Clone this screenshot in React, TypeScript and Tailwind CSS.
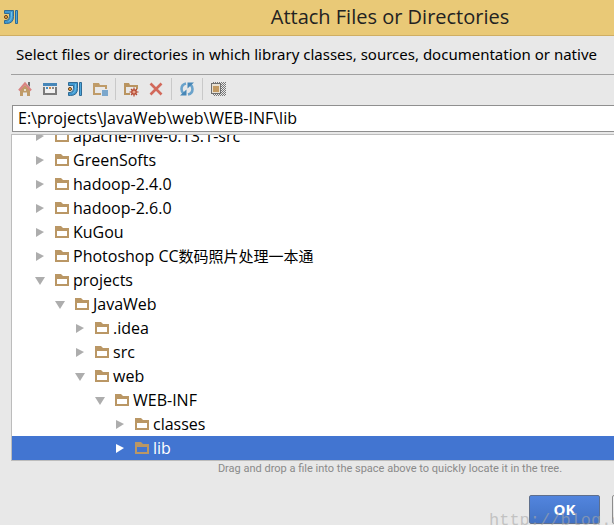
import { useState } from "react";
import type { ReactNode } from "react";

type Node = { name: string; cjk?: string; depth: number; open?: boolean };

const nodes: Node[] = [
  { name: "apache-hive-0.13.1-src", depth: 0 },
  { name: "GreenSofts", depth: 0 },
  { name: "hadoop-2.4.0", depth: 0 },
  { name: "hadoop-2.6.0", depth: 0 },
  { name: "KuGou", depth: 0 },
  { name: "Photoshop CC", cjk: "数码照片处理一本通", depth: 0 },
  { name: "projects", depth: 0, open: true },
  { name: "JavaWeb", depth: 1, open: true },
  { name: ".idea", depth: 2 },
  { name: "src", depth: 2 },
  { name: "web", depth: 2, open: true },
  { name: "WEB-INF", depth: 3, open: true },
  { name: "classes", depth: 4 },
  { name: "lib", depth: 4 },
];

function Icon({ children }: { children: ReactNode }) {
  return (
    <svg viewBox="0 0 16 16" className="size-4 shrink-0" aria-hidden="true">
      {children}
    </svg>
  );
}

function IdeaIcon() {
  return (
    <Icon>
      <path d="M1.500 1.500h9v6q0 7-7 7h-2v-3h1.500q3.500 0 3.500-4v-3h-5z" fill="#3f97cf" stroke="#2f6a94" />
      <path d="M12.500 1.500h2v13h-2z" fill="#4fa8dc" stroke="#2f6a94" />
      <path d="M8.500 3v4.500q0 4-3 5" fill="none" stroke="#6fc0ea" />
      <circle cx="3" cy="8" r="1.600" fill="#e0983a" stroke="#6b4a24" />
    </Icon>
  );
}

function HomeIcon() {
  return (
    <Icon>
      <path d="M11 1h2v5l-2-2z" fill="#6e6e6e" />
      <path d="M3 9l5-5 5 5v6h-3v-3.500H6V15H3z" fill="#bf9b68" />
      <path d="M7 8h2v2H7z" fill="#e8dcc8" />
      <path d="M2 9.500l6-7 6 7" fill="none" stroke="#d98482" strokeWidth="2.200" />
    </Icon>
  );
}

function DesktopIcon() {
  return (
    <Icon>
      <path d="M1 2h14v3H1z" fill="#4686b8" />
      <path d="M1 6h2v6h10V6h2v8H1z" fill="#7a7a7a" />
      <path d="M3 6h10v6H3z" fill="#f1f1f1" />
      <path d="M4 6h2v2H4z" fill="#4a8fc0" />
      <path d="M7 6h2v2H7z" fill="#cc8a4a" />
      <path d="M10 6h2v2h-2z" fill="#8a8a8a" />
    </Icon>
  );
}

function ModuleDirIcon() {
  return (
    <Icon>
      <path d="M1 2h6l1 2h7v4h-2V6H3v6h6v2H1z" fill="#bf9b68" />
      <path d="M10 9h6v6h-6z" fill="#7ba7cc" />
    </Icon>
  );
}

function NewFolderIcon() {
  return (
    <Icon>
      <path d="M1 2h5l1 2h8v4h-2V6H3v6h4v2H1z" fill="#b99460" />
      <path d="M11 6.500v9M6.500 11h9M8 8l6 6M14 8l-6 6" stroke="#b4472f" strokeWidth="1.200" />
      <circle cx="11" cy="11" r="2.200" fill="#e8a58f" stroke="#b4472f" strokeWidth="1.200" />
    </Icon>
  );
}

function DeleteIcon() {
  return (
    <Icon>
      <path d="M2.500 2.500l11 11M13.500 2.500l-11 11" stroke="#d2695b" strokeWidth="2.600" />
    </Icon>
  );
}

function RefreshIcon() {
  return (
    <Icon>
      <path d="M7 2.500Q2.500 3.500 2.500 8q0 2.500 2 4.500" fill="none" stroke="#6ba3cb" strokeWidth="2.600" />
      <path d="M1 14.500h6.500V8.500z" fill="#4787b7" />
      <path d="M9 13.500q4.500-1 4.500-5.500 0-2.500-2-4.500" fill="none" stroke="#6ba3cb" strokeWidth="2.600" />
      <path d="M15 1.500H8.500v6z" fill="#4787b7" />
    </Icon>
  );
}

function HiddenIcon() {
  return (
    <Icon>
      <defs>
        <pattern id="dots" width="2" height="2" patternUnits="userSpaceOnUse">
          <path d="M0 0h1v1H0zM1 1h1v1H1z" fill="#777777" />
        </pattern>
      </defs>
      <path d="M3 1h13v14H3z" fill="url(#dots)" shapeRendering="crispEdges" />
      <path d="M1 2h10v11H1z" fill="#6f6f6f" />
      <path d="M2 3h8v9H2z" fill="#e8e0d2" />
      <path d="M3 5h6v6H3z" fill="#c39a62" />
    </Icon>
  );
}

function FolderIcon() {
  return (
    <Icon>
      <path fillRule="evenodd" d="M1 2h6l2 2h6v10H1zM3 7v5h10V7z" fill="#ba9765" />
    </Icon>
  );
}

function Arrow({ open }: { open?: boolean }) {
  return (
    <Icon>
      <path d={open ? "M3 5h10l-5 8z" : "M4 4l8 4-8 5z"} fill="currentColor" />
    </Icon>
  );
}

function ToolButton({ label, children }: { label: string; children: ReactNode }) {
  return (
    <button type="button" aria-label={label} className="flex size-6 items-center justify-center">
      {children}
    </button>
  );
}

function Separator() {
  return (
    <div className="flex h-[22px] w-[5px] justify-center">
      <span className="w-px bg-[#c9c9c9]" />
    </div>
  );
}

function Tree() {
  const [selected, setSelected] = useState("lib");
  return (
    <ul
      role="tree"
      aria-label="Directories"
      className="ml-[11px] mt-0.5 flex h-[327px] flex-col justify-end overflow-hidden border border-[#bcbcbc] bg-white"
    >
      {nodes.map((node) => {
        const active = node.name === selected;
        return (
          <li
            key={node.name}
            role="treeitem"
            aria-selected={active}
            aria-expanded={!!node.open}
            onClick={() => setSelected(node.name)}
            className={`flex h-6 shrink-0 items-center ${active ? "bg-[#4275d1] text-white" : "text-black"}`}
            style={{ paddingLeft: 20 + node.depth * 20 }}
          >
            <span className={`mr-1.5 ${active ? "text-white" : "text-[#adadad]"}`}>
              <Arrow open={node.open} />
            </span>
            <FolderIcon />
            <span className="ml-[3px] whitespace-nowrap">
              {node.name}
              {node.cjk && <span className="text-[15px]">{node.cjk}</span>}
            </span>
          </li>
        );
      })}
    </ul>
  );
}

export default function App() {
  const [path, setPath] = useState("E:\\projects\\JavaWeb\\web\\WEB-INF\\lib");
  return (
    <div className="relative h-screen overflow-hidden bg-[#e8e8e8] font-['Open_Sans','Noto_Sans_CJK_SC',sans-serif] text-[16px] leading-6 text-black">
      <div className="min-w-[780px]">
        <header className="flex h-9 items-center border-b border-[#cfae63] bg-[#e9c977] px-[3px] pb-0.5">
          <IdeaIcon />
          <h1 className="flex-1 pr-4 text-center text-[20px] text-[#222222]">Attach Files or Directories</h1>
        </header>

        <p className="whitespace-nowrap px-4 pb-2 pt-1.5 font-['Noto_Sans',sans-serif] text-[15px]">
          Select files or directories in which library classes, sources, documentation or native
        </p>

        <div className="ml-[11px] flex h-[31px] items-center gap-px border-t border-[#a0a0a0] pb-0.5 pl-0.5">
          <ToolButton label="Home"><HomeIcon /></ToolButton>
          <ToolButton label="Desktop"><DesktopIcon /></ToolButton>
          <ToolButton label="Project"><IdeaIcon /></ToolButton>
          <ToolButton label="Module"><ModuleDirIcon /></ToolButton>
          <Separator />
          <ToolButton label="New Folder"><NewFolderIcon /></ToolButton>
          <ToolButton label="Delete"><DeleteIcon /></ToolButton>
          <Separator />
          <ToolButton label="Refresh"><RefreshIcon /></ToolButton>
          <Separator />
          <ToolButton label="Show Hidden Files"><HiddenIcon /></ToolButton>
        </div>

        <div className="ml-3">
          <input
            type="text"
            aria-label="Path"
            value={path}
            onChange={(e) => setPath(e.target.value)}
            className="block h-[27px] w-full border border-[#8f8f8f] bg-white px-[5px] pb-0.5 outline-none"
          />
        </div>

        <Tree />

        <p className="text-center font-[Roboto,sans-serif] text-[11px] leading-4 text-[#8a8a8a]">
          Drag and drop a file into the space above to quickly locate it in the tree.
        </p>

        <footer className="flex justify-end gap-3 pr-[97px] pt-[18px]">
          <button
            type="button"
            className="h-[29px] w-[71px] rounded-xs border border-[#5f6f8c] bg-linear-to-b from-[#5285de] to-[#4272c4] text-[15px] leading-none font-bold text-white"
          >
            OK
          </button>
          <button
            type="button"
            className="h-[29px] w-[71px] rounded-xs border border-[#8c8c8c] bg-linear-to-b from-[#f4f4f4] to-[#e0e0e0] leading-none"
          >
            Cancel
          </button>
        </footer>
      </div>

      <span className="pointer-events-none absolute -bottom-2 left-[489px] whitespace-nowrap font-['Liberation_Mono',monospace] text-[17px] leading-6 text-[#a8a8a8]/60">
        http://blog.c
      </span>
    </div>
  );
}
